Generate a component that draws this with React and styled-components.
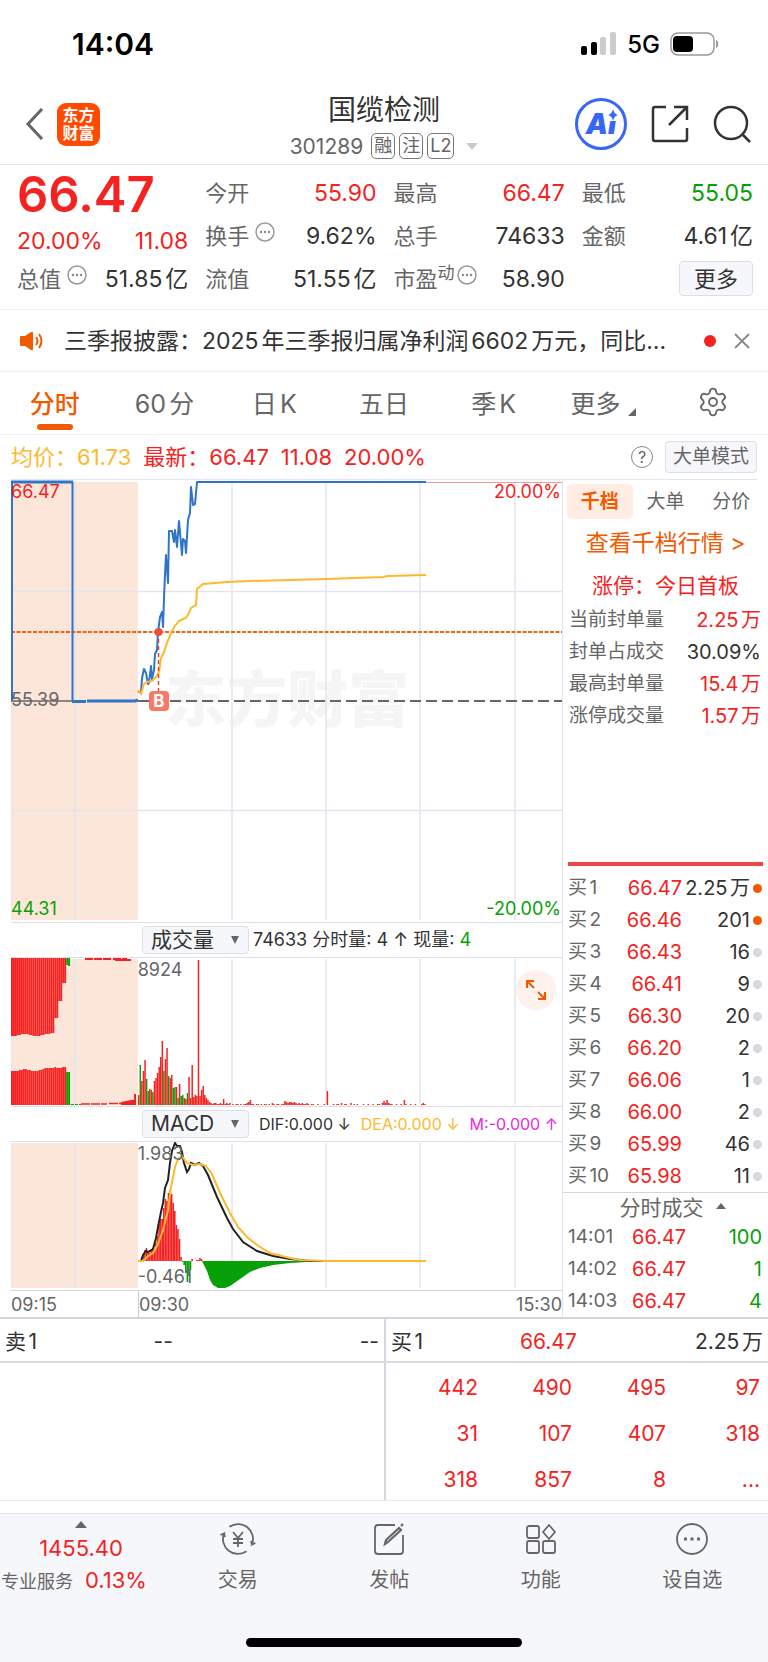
import styled, { createGlobalStyle } from 'styled-components';
import { Settings } from 'lucide-react';

const RED = '#f52222';
const GREEN = '#08a008';
const ORANGE = '#f25a00';
const YELLOW = '#fdb92e';

// one bar per minute, starting at 09:30; negative values are falling minutes
const MINUTE = 1.572;
const volumes = [
  10, -40, 24, 34, 45, -26, -14, 16, 15, -13, 24, 27, 32, 38, 48, 64, -34, 46,
  57, -29, 27, 30, -17, -18, 18, -7, 21, -9, -10, 7, 6, -12, 28, 7, 40, 8, 10,
  9, 145, 9, 15, 19, 10, 7, 5, 3, 2, 1, 2, 2, 1, 1, 2, 1, 6, 1, 2, 1, 2, 0, 1,
  0, 1, 1, 0, 1, 0, 1, 1, 2, 3, 5, 1, 1, 0, 1, 1, 0, 1, 0, 1, 1, 0, 1, 0, 2, 1,
  0, 1, 1, 0, 1, 1, 4, 3, 2, 3, 3, 2, 3, 2, 1, 2, 1, 2, 1, 1, 2, 1, 0, 1, 1, 0,
  0, 1, 0, 0, 0, 1, 0, 14, 0, 0, 0, 1, 0, 1, 1, 0, 2, 0, 1, 1, 0, 0, 2, 0, 1, 0,
  1, 0, 0, 0, 1, 0, 0, 1, 0, 0, 1, 0, 0, 1, 1, 0, 2, 4, 2, 5, 2, 1, 1, 0, 0, 1,
  0, 0, 1, 0, 5, 1, 0, 0, 1, 0, 0, 1, 0, 0, 0, 1, 2, 1,
];
const macdBars = [
  1, 5, 11, 13, 10, 8, 10, 13, 11, 18, 25, 37, 42, 42, 53, 62, 60, 68, 71, 67,
  58, 50, 36, 32, 22, 4, -1, -4, -12, -21, -15, -9, 2, 0, 0, 1, 1, 3, 2,
];
const auctionTop = [
  78, 78, 78, 77, 77, 76, 76, 76, 76, 77, 77, 78, 78, 78, 78, 77, 77, 76, 76,
  76, 75, 75, 60, 60, 43, 43, 25, 25, -7, -8,
];
const auctionBottom = [
  34, 34, 34, 34, 35, 35, 36, 36, 35, 35, 34, 34, 34, 34, 35, 35, 36, 37, 37,
  37, 37, 37, 38, 37, 37, 37, 38, 38, -33, -33,
];

const pricePoints =
  '127,212 130,212 131,198 133,189 135,193 137,204 138,203 140,186 141,199 143,190 144,174 146,170 147,152 149,137 151,132 152,147 153,118 154,94 155,75 157,103 158,51 161,51 163,62 164,50 166,67 168,41 171,75 172,59 174,61 175,73 177,40 179,33 180,7 182,25 184,24 186,2 415,2';
const averagePoints =
  '127,210 130,214 133,204 136,202 141,201 145,197 148,192 150,178 153,172 156,163 158,158 161,151 164,146 168,141 172,139 175,138 178,133 180,128 185,125 186,109 192,104 216,102 239,101 279,100 315,99 372,97 377,96 415,95';
const difPoints =
  '127,119 130,119 132,113 135,109 137,110 142,107 145,96 147,85 150,70 152,61 154,46 157,38 159,21 161,9 164,1 166,4 169,4 171,10 173,21 176,30 178,27 180,21 184,23 188,21 192,24 197,33 206,55 216,76 222,87 232,100 246,109 262,114 279,117 300,119 312,119';
const deaPoints =
  '127,119 132,119 136,115 142,111 147,102 152,88 157,68 160,45 164,25 167,17 171,14 173,17 176,21 182,23 189,22 195,24 201,32 209,51 219,71 227,85 236,95 246,103 259,111 279,116 289,118 316,119 415,119';

const sealInfo = [
  ['当前封单量', '2.25万', RED],
  ['封单占成交', '30.09%', '#333'],
  ['最高封单量', '15.4万', RED],
  ['涨停成交量', '1.57万', RED],
];

const bids = [
  ['66.47', '2.25万', true],
  ['66.46', '201', true],
  ['66.43', '16'],
  ['66.41', '9'],
  ['66.30', '20'],
  ['66.20', '2'],
  ['66.06', '1'],
  ['66.00', '2'],
  ['65.99', '46'],
  ['65.98', '11'],
];

const trades = [
  ['14:01', '66.47', '100'],
  ['14:02', '66.47', '1'],
  ['14:03', '66.47', '4'],
];

const queue = [
  ['442', '490', '495', '97'],
  ['31', '107', '407', '318'],
  ['318', '857', '8', '...'],
];

function More() {
  return (
    <MoreIcon viewBox="0 0 20 20" aria-hidden="true">
      <circle cx="10" cy="10" r="9" fill="none" stroke="#999" strokeWidth="1.5" />
      <circle cx="6" cy="10" r="1.2" fill="#888" />
      <circle cx="10" cy="10" r="1.2" fill="#888" />
      <circle cx="14" cy="10" r="1.2" fill="#888" />
    </MoreIcon>
  );
}

function Grid({ height }) {
  return (
    <g stroke="#e2e5ef" strokeWidth="1.5">
      {[0, 64, 221, 315, 409, 504].map((x) => (
        <line key={x} x1={x} y1="1" x2={x} y2={height - 2} vectorEffect="non-scaling-stroke" />
      ))}
    </g>
  );
}

function Bars({ values, start, step, base, width, down }) {
  return values.map((value, i) => {
    const size = Math.abs(value);
    return (
      <rect
        key={i}
        x={start + i * step}
        y={down ? base : base - size}
        width={width}
        height={size}
        fill={value < 0 ? GREEN : RED}
      />
    );
  });
}

function PriceChart() {
  return (
    <ChartBox $height={442}>
      <ChartSvg viewBox="0 0 551 442" preserveAspectRatio="none">
        <rect x="0" y="2" width="127" height="438" fill="#fce6da" />
      </ChartSvg>
      <Watermark>东方财富</Watermark>
      <ChartSvg viewBox="0 0 551 442" preserveAspectRatio="none">
        <Grid height={442} />
        <path d="M0 111.5H551M0 330.5H551" stroke="#e2e5ef" strokeWidth="1.5" />
        <path d="M186 2.5H551" stroke="#f99" strokeWidth="1" />
        <path d="M0 152H551" stroke="#f0640f" strokeWidth="2" strokeDasharray="4 1.5" />
        <path d="M127 221H551" stroke="#666" strokeWidth="2" strokeDasharray="11 5" />
        <path d="M0 221H62" stroke="#666" strokeWidth="1.5" />
        <g fill="none" stroke="#2f74c6" strokeLinejoin="round">
          <path d="M1 221V2M61.5 2V221" strokeWidth="2" />
          <path d="M0 2H62M61 221.5H75M76 221H124L127 220" strokeWidth="3" />
          <polyline points={pricePoints} strokeWidth="2" />
        </g>
        <polyline points={averagePoints} fill="none" stroke={YELLOW} strokeWidth="2" />
        <path d="M147.5 152V212" stroke="#f0402f" strokeWidth="1.5" strokeDasharray="4 3" />
        <circle cx="147.5" cy="152" r="4" fill="#e84f3d" />
      </ChartSvg>
      <Label $color={RED} $top={2}>66.47</Label>
      <Label $color={RED} $top={2} $right>20.00%</Label>
      <Label $top={210}>55.39</Label>
      <Label $color={GREEN} $top={419}>44.31</Label>
      <Label $color={GREEN} $top={419} $right>-20.00%</Label>
      <BuyMark>B</BuyMark>
    </ChartBox>
  );
}

function VolumeChart() {
  return (
    <ChartBox $height={149} $line>
      <ChartSvg viewBox="0 0 551 148" preserveAspectRatio="none">
        <rect x="0" y="1" width="127" height="146" fill="#fce6da" />
        <Grid height={148} />
        <Bars values={auctionTop} start={0} step={1.97} base={0} width={1.94} down />
        <Bars values={auctionBottom} start={0} step={1.97} base={147} width={1.94} />
        <path d="M74 1H100M102 1H116" stroke={RED} strokeWidth="2" strokeDasharray="8 1" />
        <path d="M60 146.5H70" stroke={GREEN} strokeWidth="1" strokeDasharray="3 1" />
        <path d="M70 146H96M98 145.5H110" stroke={RED} strokeWidth="1.5" strokeDasharray="9 1" />
        <path d="M104 2H120" stroke={RED} strokeWidth="2" />
        <path d="M110 147V144L120 142H123V136H125V147Z" fill={RED} />
        <Bars values={volumes} start={127} step={MINUTE} base={147} width={1.5} />
      </ChartSvg>
      <Label $top={2} $inner>8924</Label>
      <ExpandButton aria-label="全屏">
        <svg width="22" height="22" viewBox="0 0 22 22" fill="none" stroke={ORANGE} strokeWidth="2">
          <path d="M2 9V2H9M2 2L9 9M13 13L20 20M20 13V20H13" />
        </svg>
      </ExpandButton>
    </ChartBox>
  );
}

function MacdChart() {
  return (
    <ChartBox $height={149} $line>
      <ChartSvg viewBox="0 0 551 148" preserveAspectRatio="none">
        <rect x="0" y="1" width="127" height="145" fill="#fce6da" />
        <Grid height={148} />
        {macdBars.map((value, i) => (
          <rect
            key={i}
            x={130 + i * MINUTE}
            y={value < 0 ? 119 : 119 - value}
            width={1.56}
            height={Math.abs(value)}
            fill={value < 0 ? GREEN : RED}
          />
        ))}
        <path
          d="M191 119L196 129L199 138L202 143L207 146L214 146L219 144L229 137L239 130L249 126L262 123L279 121L312 119Z"
          fill={GREEN}
        />
        <polyline points={difPoints} fill="none" stroke="#222" strokeWidth="2" />
        <polyline points={deaPoints} fill="none" stroke={YELLOW} strokeWidth="2" />
      </ChartSvg>
      <Label $top={2} $inner>1.983</Label>
      <Label $top={125} $inner>-0.461</Label>
    </ChartBox>
  );
}

function StatusBar() {
  return (
    <Status>
      <Time>14:04</Time>
      <StatusIcons>
        <svg width="36" height="24" viewBox="0 0 36 24">
          <rect x="0" y="14" width="6" height="9" rx="2" />
          <rect x="10" y="10" width="6" height="13" rx="2" />
          <rect x="19" y="5" width="6" height="18" rx="2" fill="#ccc" />
          <rect x="29" y="0" width="6" height="23" rx="2" fill="#ccc" />
        </svg>
        <Network>5G</Network>
        <svg width="50" height="24" viewBox="0 0 50 24">
          <rect x="1" y="1" width="43" height="22" rx="7" fill="none" stroke="#999" strokeWidth="1.5" />
          <rect x="3" y="4" width="20" height="16" rx="4" />
          <path d="M46 8C49 9 49 15 46 16Z" fill="#999" />
        </svg>
      </StatusIcons>
    </Status>
  );
}

function Header() {
  return (
    <HeaderBar>
      <HeaderSide>
        <IconButton aria-label="返回">
          <svg width="20" height="32" viewBox="0 0 20 32" fill="none" stroke="#666" strokeWidth="3">
            <path d="M17 1L3 16L17 31" />
          </svg>
        </IconButton>
        <Logo>
          <span>东方</span>
          <span>财富</span>
        </Logo>
      </HeaderSide>
      <div>
        <Title>国缆检测</Title>
        <SubTitle>
          <span>301289</span>
          <Tags>
            <Tag>融</Tag>
            <Tag>注</Tag>
            <Tag>L2</Tag>
          </Tags>
          <svg width="12" height="7" viewBox="0 0 12 7" fill="#ccc">
            <path d="M0 0H12L6 7Z" />
          </svg>
        </SubTitle>
      </div>
      <HeaderSide $end>
        <AiButton>
          Ai
          <svg width="12" height="12" viewBox="0 0 12 12" fill="#3866fa">
            <rect width="12" height="12" fill="#fff" />
            <path d="M7 0Q8 5 12 6Q8 7 7 12Q6 7 2 6Q6 5 7 0Z" />
          </svg>
        </AiButton>
        <IconButton aria-label="分享">
          <svg width="38" height="38" viewBox="0 0 38 38" fill="none" stroke="#333" strokeWidth="2.5">
            <path d="M15 2H4Q2 2 2 4V34Q2 36 4 36H34Q36 36 36 34V23M23 2H36V15M36 2L18 20" />
          </svg>
        </IconButton>
        <IconButton aria-label="搜索">
          <svg width="38" height="38" viewBox="0 0 38 38" fill="none" stroke="#333" strokeWidth="2.5">
            <circle cx="18" cy="18" r="16" />
            <path d="M29 29L37 37" />
          </svg>
        </IconButton>
      </HeaderSide>
    </HeaderBar>
  );
}

function Quote() {
  return (
    <QuoteGrid>
      <div>
        <Price>66.47</Price>
        <Change>
          <span>20.00%</span>
          <span>11.08</span>
        </Change>
        <Stat><dt>总值<More /></dt><dd>51.85亿</dd></Stat>
      </div>
      <div>
        <Stat $color={RED}><dt>今开</dt><dd>55.90</dd></Stat>
        <Stat><dt>换手<More /></dt><dd>9.62%</dd></Stat>
        <Stat><dt>流值</dt><dd>51.55亿</dd></Stat>
      </div>
      <div>
        <Stat $color={RED}><dt>最高</dt><dd>66.47</dd></Stat>
        <Stat><dt>总手</dt><dd>74633</dd></Stat>
        <Stat><dt>市盈<Sup>动</Sup><More /></dt><dd>58.90</dd></Stat>
      </div>
      <div>
        <Stat $color={GREEN}><dt>最低</dt><dd>55.05</dd></Stat>
        <Stat><dt>金额</dt><dd>4.61亿</dd></Stat>
        <MoreRow><SmallButton $size={22}>更多</SmallButton></MoreRow>
      </div>
    </QuoteGrid>
  );
}

function News() {
  return (
    <NewsRow>
      <svg width="24" height="20" viewBox="0 0 24 20" fill={ORANGE}>
        <path d="M0 6Q0 5 1 5H5L11 1Q13 0 13 2V18Q13 20 11 19L5 15H1Q0 15 0 14Z" />
        <path d="M16 6Q19 10 16 14M19 3Q24 10 19 17" fill="none" stroke={ORANGE} strokeWidth="2" />
      </svg>
      <NewsText href="#news">三季报披露：2025年三季报归属净利润6602万元，同比...</NewsText>
      <Dot $size={12} $color={RED} />
      <IconButton aria-label="关闭">
        <svg width="16" height="16" viewBox="0 0 16 16" stroke="#888" strokeWidth="1.8">
          <path d="M1 1L15 15M15 1L1 15" />
        </svg>
      </IconButton>
    </NewsRow>
  );
}

function OrderPanel() {
  return (
    <Panel>
      <PanelTabs>
        <PanelTab $active>千档</PanelTab>
        <PanelTab>大单</PanelTab>
        <PanelTab>分价</PanelTab>
      </PanelTabs>
      <DepthLink href="#depth">查看千档行情 &gt;</DepthLink>
      <LimitTitle>涨停：今日首板</LimitTitle>
      {sealInfo.map(([name, value, color]) => (
        <SealRow key={name} $color={color}>
          <dt>{name}</dt>
          <dd>{value}</dd>
        </SealRow>
      ))}
      <Divider />
      <BookTable>
        <tbody>
          {bids.map(([price, amount, hot], i) => (
            <tr key={price}>
              <th scope="row">买{i + 1}</th>
              <td>{price}</td>
              <td>{amount}</td>
              <td><Dot $size={9} $color={hot ? ORANGE : '#d4d8df'} /></td>
            </tr>
          ))}
        </tbody>
      </BookTable>
      <TradesTitle>
        分时成交
        <svg width="10" height="6" viewBox="0 0 10 6" fill="#666">
          <path d="M0 6H10L5 0Z" />
        </svg>
      </TradesTitle>
      <TradesTable>
        <tbody>
          {trades.map(([time, price, amount]) => (
            <tr key={time}>
              <th scope="row">{time}</th>
              <td>{price}</td>
              <td>{amount}</td>
            </tr>
          ))}
        </tbody>
      </TradesTable>
    </Panel>
  );
}

function Indicator({ label, options }) {
  return (
    <SelectBox>
      <select aria-label={label}>
        {options.map((option) => <option key={option}>{option}</option>)}
      </select>
      <svg width="8" height="8" viewBox="0 0 8 8" fill="#666">
        <path d="M0 0H8L4 8Z" />
      </svg>
    </SelectBox>
  );
}

function BottomNav() {
  return (
    <Nav>
      <NavBar>
        <IndexCell>
          <svg width="12" height="7" viewBox="0 0 12 7" fill="#666">
            <path d="M0 7H12L6 0Z" />
          </svg>
          <b>1455.40</b>
          <div><small>专业服务</small><b>0.13%</b></div>
        </IndexCell>
        <NavItem>
          <svg width="36" height="32" viewBox="0 0 36 32">
            <path d="M9.5 3.7A15 15 0 0 1 32 21.5L35.5 20M32 21.500L31 18" />
            <path d="M26.5 28.3A15 15 0 0 1 4 10.500L0.5 12M4 10.500L5 14" />
            <path d="M13 9L18 15L23 9M18 15V24M13 16H23M13 20H23" />
          </svg>
          交易
        </NavItem>
        <NavItem>
          <svg width="32" height="32" viewBox="0 0 32 32">
            <path d="M22 2H5Q2 2 2 5V28Q2 31 5 31H27Q30 31 30 28V12" />
            <path d="M12 21L13 17L26 5L28 7L15 19ZM28 3L30 1" strokeWidth="2.2" />
          </svg>
          发帖
        </NavItem>
        <NavItem>
          <svg width="32" height="32" viewBox="0 0 32 32">
            <rect x="2" y="3" width="12" height="12" rx="2" />
            <rect x="2" y="18" width="12" height="12" rx="2" />
            <rect x="18" y="18" width="12" height="12" rx="2" />
            <path d="M24 2L30 9L24 16L18 9Z" strokeLinejoin="round" />
          </svg>
          功能
        </NavItem>
        <NavItem>
          <svg width="32" height="32" viewBox="0 0 32 32">
            <circle cx="16" cy="16" r="15" />
            <path d="M8 16H11M14.5 16H17.5M21 16H24" strokeWidth="3" />
          </svg>
          设自选
        </NavItem>
      </NavBar>
      <HomeBar />
    </Nav>
  );
}

export default function App() {
  return (
    <Page>
      <GlobalStyle />
      <StatusBar />
      <Header />
      <Quote />
      <News />
      <Tabs>
        <Tab $active>分时</Tab>
        <Tab>60分</Tab>
        <Tab>日K</Tab>
        <Tab>五日</Tab>
        <Tab>季K</Tab>
        <Tab>
          更多
          <svg width="8" height="8" viewBox="0 0 8 8" fill="#666">
            <path d="M8 0V8H0Z" />
          </svg>
        </Tab>
        <Tab aria-label="设置"><Settings size={32} strokeWidth={1.4} /></Tab>
      </Tabs>
      <Summary>
        <Figure $color={YELLOW}>均价：61.73</Figure>
        <Figure $color={RED}>最新：66.47</Figure>
        <Figure $color={RED}>11.08</Figure>
        <Figure $color={RED}>20.00%</Figure>
        <Help aria-label="帮助">?</Help>
        <SmallButton $size={19}>大单模式</SmallButton>
      </Summary>
      <Main>
        <Charts>
          <PriceChart />
          <Toolbar>
            <Indicator label="副图一" options={['成交量', '成交额']} />
            <ToolText>74633 分时量: 4 ↑ 现量: <em>4</em></ToolText>
          </Toolbar>
          <VolumeChart />
          <Toolbar $spread>
            <Indicator label="副图二" options={['MACD', 'KDJ']} />
            <Legend>DIF:0.000 ↓</Legend>
            <Legend $color={YELLOW}>DEA:0.000 ↓</Legend>
            <Legend $color="#e42be4">M:-0.000 ↑</Legend>
          </Toolbar>
          <MacdChart />
          <Axis>
            <span>09:15</span>
            <span>09:30</span>
            <span>15:30</span>
          </Axis>
        </Charts>
        <OrderPanel />
      </Main>
      <Queues>
        <Side>
          <SideHead>
            <span>卖1</span>
            <span>--</span>
            <span>--</span>
          </SideHead>
        </Side>
        <Side>
          <SideHead $color={RED}>
            <span>买1</span>
            <span>66.47</span>
            <span>2.25万</span>
          </SideHead>
          <QueueTable>
            <tbody>
              {queue.map((row, i) => (
                <tr key={i}>
                  {row.map((cell, j) => <td key={j}>{cell}</td>)}
                </tr>
              ))}
            </tbody>
          </QueueTable>
        </Side>
      </Queues>
      <BottomNav />
    </Page>
  );
}

const GlobalStyle = createGlobalStyle`
  * {
    box-sizing: border-box;
  }

  body {
    margin: 0;
    background: #fff;
    color: #333;
    font-family: Inter, "Noto Sans CJK SC", sans-serif;
    text-autospace: normal;
  }

  button,
  select {
    margin: 0;
    padding: 0;
    border: 0;
    background: none;
    color: inherit;
    font: inherit;
  }

  svg {
    display: block;
    flex-shrink: 0;
  }

  dl, dt, dd, h1 {
    margin: 0;
  }

  table {
    border-collapse: collapse;
    table-layout: fixed;
  }

  th, td {
    padding: 0;
    font-weight: 400;
    white-space: nowrap;
  }
`;

const Page = styled.div`
  display: flex;
  flex-direction: column;
  min-height: 100vh;
`;

const Status = styled.div`
  display: flex;
  align-items: center;
  justify-content: space-between;
  height: 88px;
  padding: 0 48px 0 72px;
`;

const Time = styled.span`
  color: #000;
  font-size: 30px;
  font-weight: 600;
`;

const StatusIcons = styled.div`
  display: flex;
  align-items: center;
  gap: 10px;
`;

const Network = styled.span`
  color: #000;
  font-size: 24px;
  font-weight: 500;
`;

const HeaderBar = styled.header`
  display: grid;
  grid-template-columns: 1fr auto 1fr;
  align-items: center;
  height: 77px;
  padding: 0 17px;
  border-bottom: 1px solid #e8e8e8;
`;

const HeaderSide = styled.div`
  display: flex;
  align-items: center;
  justify-content: ${(props) => (props.$end ? 'flex-end' : 'flex-start')};
  gap: ${(props) => (props.$end ? '24px' : '12px')};
  padding: ${(props) => (props.$end ? '0 0 4px' : '0 0 4px 8px')};
`;

const IconButton = styled.button`
  display: flex;
  cursor: pointer;
`;

const Logo = styled.div`
  display: flex;
  flex-direction: column;
  align-items: center;
  justify-content: center;
  width: 43px;
  height: 43px;
  border-radius: 9px;
  background: #ff4a00;
  color: #fff;
  font-size: 16px;
  font-weight: 700;
  line-height: 18px;
`;

const Title = styled.h1`
  font-size: 28px;
  font-weight: 400;
  line-height: 40px;
  text-align: center;
`;

const SubTitle = styled.div`
  display: flex;
  align-items: center;
  gap: 8px;
  height: 32px;
  color: #666;
  font-size: 21px;
`;

const Tags = styled.div`
  display: flex;
  gap: 4px;
  margin-right: 4px;
`;

const Tag = styled.span`
  height: 26px;
  padding: 0 2px;
  border: 1px solid #777;
  border-radius: 5px;
  font-size: 18px;
  line-height: 24px;
`;

const AiButton = styled.button`
  position: relative;
  width: 52px;
  height: 52px;
  border: 3px solid #3866fa;
  border-radius: 50%;
  color: #3866fa;
  font-size: 28px;
  font-style: italic;
  font-weight: 900;
  cursor: pointer;

  > svg {
    position: absolute;
    top: 8px;
    right: 6px;
  }
`;

const QuoteGrid = styled.dl`
  display: grid;
  grid-template-columns: repeat(4, 1fr);
  gap: 17px;
  padding: 6px 15px 9px 17px;
  border-bottom: 1px solid #f0f0f3;
`;

const Price = styled.div`
  margin-bottom: 6px;
  color: ${RED};
  font-size: 49px;
  font-weight: 600;
  line-height: 48px;
`;

const Change = styled.div`
  display: flex;
  align-items: center;
  justify-content: space-between;
  height: 32px;
  color: ${RED};
  font-size: 23px;
`;

const Stat = styled.div`
  display: flex;
  align-items: center;
  justify-content: space-between;
  height: 43px;
  line-height: 32px;

  > dt {
    display: flex;
    color: #666;
    font-size: 22px;
  }

  > dd {
    color: ${(props) => props.$color || '#333'};
    font-size: 23px;
    white-space: nowrap;
  }
`;

const MoreIcon = styled.svg`
  width: 20px;
  height: 20px;
  margin: 2px 0 0 6px;
`;

const Sup = styled.span`
  font-size: 17px;
  line-height: 20px;

  + svg {
    margin-left: 2px;
  }
`;

const MoreRow = styled.div`
  display: flex;
  align-items: center;
  justify-content: flex-end;
  height: 43px;
`;

const SmallButton = styled.button`
  height: ${(props) => (props.$size > 20 ? 35 : 32)}px;
  padding: 0 ${(props) => (props.$size > 20 ? 14 : 7)}px;
  border: 1px solid #dcdee6;
  border-radius: 4px;
  background: #f6f7fa;
  font-size: ${(props) => props.$size}px;
  line-height: 28px;
  cursor: pointer;
`;

const NewsRow = styled.div`
  display: flex;
  align-items: center;
  height: 62px;
  padding: 0 18px 0 20px;
  border-bottom: 1px solid #f0f0f3;
`;

const NewsText = styled.a`
  flex: 1;
  min-width: 0;
  margin-left: 20px;
  overflow: hidden;
  color: #333;
  font-size: 23px;
  line-height: 32px;
  text-decoration: none;
  white-space: nowrap;
`;

const Dot = styled.span`
  display: block;
  width: ${(props) => props.$size}px;
  height: ${(props) => props.$size}px;
  border-radius: 50%;
  background: ${(props) => props.$color};

  ${NewsRow} > & {
    margin: 0 18px;
  }
`;

const Tabs = styled.nav`
  display: grid;
  grid-template-columns: repeat(7, 1fr);
  height: 63px;
  border-bottom: 1px solid #f0f0f3;
`;

const Tab = styled.button`
  position: relative;
  display: flex;
  align-items: center;
  justify-content: center;
  gap: 8px;
  padding-bottom: 2px;
  color: ${(props) => (props.$active ? ORANGE : '#666')};
  font-size: 25px;
  font-weight: ${(props) => (props.$active ? 500 : 400)};
  cursor: pointer;

  &::after {
    content: '';
    position: absolute;
    bottom: 4px;
    width: 36px;
    height: 6px;
    border-radius: 3px;
    background: ${(props) => (props.$active ? ORANGE : 'transparent')};
  }

  > svg[viewBox="0 0 8 8"] {
    align-self: flex-end;
    margin-bottom: 16px;
  }
`;

const Summary = styled.div`
  display: flex;
  align-items: center;
  gap: 12px;
  height: 45px;
  margin: 0 11px;
  border-bottom: 1px solid #e2e5ef;
  color: #666;
`;

const Figure = styled.span`
  color: ${(props) => props.$color};
  font-size: 22px;
  line-height: 28px;
`;

const Help = styled.button`
  width: 22px;
  height: 22px;
  margin-left: auto;
  border: 1px solid #888;
  border-radius: 50%;
  font-size: 16px;
  line-height: 20px;
  cursor: pointer;
`;

const Main = styled.main`
  display: flex;
  border-bottom: 2px solid #d3d6dc;
`;

const Charts = styled.div`
  flex: 1;
  min-width: 0;
  padding-left: 11px;
  border-right: 1px solid #e2e5ef;
`;

const ChartBox = styled.div`
  position: relative;
  height: ${(props) => props.$height}px;
  border-top: ${(props) => (props.$line ? '1px solid #dcdfe8' : '0')};
`;

const ChartSvg = styled.svg`
  position: absolute;
  top: 0;
  left: 0;
  width: 100%;
  height: 100%;
`;

const Label = styled.span`
  position: absolute;
  top: ${(props) => props.$top}px;
  left: ${(props) => (props.$right ? 'auto' : props.$inner ? '23%' : '0')};
  right: ${(props) => (props.$right ? '1px' : 'auto')};
  color: ${(props) => props.$color || '#666'};
  font-size: 18px;
  line-height: 20px;
`;

const Watermark = styled.span`
  position: absolute;
  top: 184px;
  left: 28%;
  color: #f5f5f6;
  font-size: 61px;
  font-weight: 900;
  line-height: 72px;
`;

const BuyMark = styled.span`
  position: absolute;
  top: 211px;
  left: 25%;
  width: 20px;
  height: 20px;
  border-radius: 4px;
  background: #fa7866;
  color: #fff;
  font-size: 17px;
  font-weight: 700;
  line-height: 20px;
  text-align: center;
`;

const ExpandButton = styled.button`
  position: absolute;
  top: 12px;
  right: 6px;
  display: flex;
  align-items: center;
  justify-content: center;
  width: 40px;
  height: 40px;
  border-radius: 50%;
  background: #fff1eb;
  cursor: pointer;
`;

const Toolbar = styled.div`
  display: flex;
  align-items: center;
  justify-content: ${(props) => (props.$spread ? 'space-between' : 'flex-start')};
  gap: 4px;
  height: 35px;
  padding: 0 4px 0 131px;
  border-top: 1px solid #dcdfe8;
`;

const SelectBox = styled.label`
  position: relative;
  width: 107px;

  > select {
    width: 100%;
    height: 28px;
    padding-left: 8px;
    border: 1px solid #dcdee6;
    border-radius: 4px;
    background: #f6f7fa;
    font-size: 21px;
    line-height: 26px;
    appearance: none;
  }

  > svg {
    position: absolute;
    top: 10px;
    right: 10px;
  }
`;

const ToolText = styled.span`
  font-size: 18px;
  line-height: 24px;
  white-space: nowrap;

  > em {
    color: ${GREEN};
    font-style: normal;
  }
`;

const Legend = styled.span`
  color: ${(props) => props.$color || '#333'};
  font-size: 16px;
  white-space: nowrap;
`;

const Axis = styled.div`
  display: grid;
  grid-template-columns: 127px 1fr auto;
  height: 27px;
  border-top: 1px solid #d3d6dc;
  color: #666;
  font-size: 18px;
  line-height: 28px;

  > span:nth-child(2) {
    border-left: 1px solid #c8cbd2;
  }
`;

const Panel = styled.aside`
  display: flex;
  flex-direction: column;
  width: 205px;
`;

const PanelTabs = styled.div`
  display: grid;
  grid-template-columns: repeat(3, 1fr);
  height: 39px;
  padding: 4px 4px 0;
`;

const PanelTab = styled.button`
  border-radius: 5px;
  background: ${(props) => (props.$active ? '#ffede3' : 'none')};
  color: ${(props) => (props.$active ? ORANGE : '#666')};
  font-size: 19px;
  font-weight: ${(props) => (props.$active ? 700 : 400)};
  line-height: 28px;
  cursor: pointer;
`;

const DepthLink = styled.a`
  color: ${ORANGE};
  font-size: 23px;
  line-height: 48px;
  text-align: center;
  text-decoration: none;
`;

const LimitTitle = styled.div`
  padding-top: 1px;
  color: ${RED};
  font-size: 21px;
  line-height: 36px;
  text-align: center;
`;

const SealRow = styled.dl`
  display: flex;
  justify-content: space-between;
  padding: 0 7px 0 6px;
  font-size: 20px;
  line-height: 32px;

  > dt {
    color: #666;
    font-size: 19px;
  }

  > dd {
    color: ${(props) => props.$color};
  }
`;

const Divider = styled.hr`
  width: 195px;
  height: 4px;
  margin: auto 5px 6px;
  border: 0;
  background: #ee4545;
`;

const BookTable = styled.table`
  width: 194px;
  margin-left: 5px;
  font-size: 20px;
  line-height: 32px;

  th {
    width: 46px;
    color: #666;
    font-size: 19px;
    text-align: left;
  }

  td {
    text-align: right;
  }

  td:nth-child(2) {
    width: 68px;
    color: ${RED};
  }

  td:nth-child(4) {
    width: 12px;
    padding-left: 3px;
  }
`;

const TradesTitle = styled.div`
  display: flex;
  align-items: center;
  justify-content: center;
  gap: 12px;
  height: 29px;
  padding: 0 0 2px 14px;
  border-top: 1px solid #d3d6dc;
  color: #666;
  font-size: 21px;
`;

const TradesTable = styled.table`
  width: 194px;
  margin-left: 5px;
  font-size: 20px;
  line-height: 32px;

  th {
    width: 64px;
    color: #666;
    font-size: 19px;
    text-align: left;
  }

  td {
    color: ${RED};
  }

  td:last-child {
    color: ${GREEN};
    text-align: right;
  }
`;

const Queues = styled.section`
  display: grid;
  grid-template-columns: 1fr 1fr;
  height: 182px;
  overflow: hidden;
  border-bottom: 1px solid #e8eaee;
`;

const Side = styled.div`
  + div {
    border-left: 2px solid #d3d6dc;
  }
`;

const SideHead = styled.div`
  display: grid;
  grid-template-columns: 3fr 5fr 5fr;
  height: 44px;
  padding: 0 5px;
  border-bottom: 2px solid #d8dbe0;
  font-size: 21px;
  line-height: 46px;

  > span:nth-child(2) {
    color: ${(props) => props.$color || '#333'};
    text-align: center;
  }

  > span:last-child {
    text-align: right;
  }
`;

const QueueTable = styled.table`
  width: calc(100% - 6px);
  margin: 2px 0 0 6px;
  color: ${RED};
  font-size: 21px;
  line-height: 46px;

  td {
    padding-right: 8px;
    text-align: right;
  }
`;

const Nav = styled.footer`
  display: flex;
  flex: 1;
  flex-direction: column;
  justify-content: space-between;
  margin-top: 12px;
  padding-bottom: 15px;
  border-top: 1px solid #e2e4e8;
  background: #f6f7fa;
`;

const NavBar = styled.nav`
  display: grid;
  grid-template-columns: 162px repeat(4, 1fr);
`;

const IndexCell = styled.button`
  display: flex;
  flex-direction: column;
  align-items: center;
  padding-top: 7px;
  cursor: pointer;

  b {
    color: ${RED};
    font-size: 22px;
    font-weight: 400;
    line-height: 40px;
  }

  > div {
    display: flex;
    align-items: center;
    align-self: flex-start;
    gap: 12px;
    height: 24px;
    padding-left: 1px;
  }

  small {
    color: #666;
    font-size: 18px;
  }
`;

const NavItem = styled.button`
  display: flex;
  flex-direction: column;
  align-items: center;
  gap: 10px;
  padding-top: 9px;
  color: #666;
  font-size: 20px;
  line-height: 30px;
  cursor: pointer;

  > svg {
    fill: none;
    stroke: #666;
    stroke-width: 1.8px;
  }
`;

const HomeBar = styled.div`
  align-self: center;
  width: 36%;
  height: 9px;
  border-radius: 5px;
  background: #000;
`;
